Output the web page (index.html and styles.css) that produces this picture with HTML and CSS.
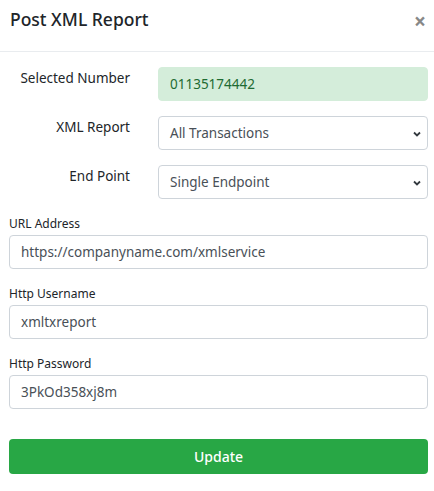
FILE: index.html
```html
<!DOCTYPE html>
<html>
<head>
<meta charset="utf-8">
<link rel="stylesheet" href="styles.css">
</head>
<body>
<div class="modal">
  <div class="modal-header">
    <h5 class="modal-title">Post XML Report</h5>
    <span class="close">&times;</span>
  </div>
  <div class="modal-body">
    <div class="grid">
      <label class="hlabel">Selected Number</label>
      <div class="field field-green">01135174442</div>
      <label class="hlabel">XML Report</label>
      <div class="field field-select">All Transactions
        <svg class="chev" width="10" height="8" viewBox="0 0 10 8"><path d="M2 2.5 L5 5.5 L8 2.5" fill="none" stroke="#343a40" stroke-width="1.8"/></svg>
      </div>
      <label class="hlabel">End Point</label>
      <div class="field field-select">Single Endpoint
        <svg class="chev" width="10" height="8" viewBox="0 0 10 8"><path d="M2 2.5 L5 5.5 L8 2.5" fill="none" stroke="#343a40" stroke-width="1.8"/></svg>
      </div>
    </div>
    <div class="group">
      <label class="vlabel">URL Address</label>
      <div class="field">https://companyname.com/xmlservice</div>
    </div>
    <div class="group">
      <label class="vlabel">Http Username</label>
      <div class="field">xmltxreport</div>
    </div>
    <div class="group">
      <label class="vlabel">Http Password</label>
      <div class="field">3PkOd358xj8m</div>
    </div>
    <button class="btn">Update</button>
  </div>
</div>
</body>
</html>
```
FILE: styles.css
```css
html, body {
  margin: 0;
  padding: 0;
  background: #fff;
}
body {
  font-family: "Noto Sans", "Open Sans", sans-serif;
  color: #212529;
}
.modal {
  width: 434px;
}
.modal-header {
  height: 52px;
  box-sizing: border-box;
  border-bottom: 1px solid #e9ecef;
  display: flex;
  justify-content: space-between;
  align-items: flex-start;
  padding: 5px 8px 0 10px;
}
.modal-title {
  margin: 0;
  font-size: 17.5px;
  font-weight: 500;
  line-height: 28px;
}
.close {
  font-size: 21px;
  font-weight: 700;
  color: #888;
  line-height: 28px;
  margin-top: 2px;
}
.modal-body {
  padding: 15px 6px 0 9px;
}
.grid {
  display: grid;
  grid-template-columns: 121px 1fr;
  column-gap: 28px;
  row-gap: 15px;
}
.hlabel {
  text-align: right;
  font-size: 13.5px;
  line-height: 20px;
  padding-top: 1px;
  color: #212529;
}
.field {
  height: 34px;
  box-sizing: border-box;
  border: 1px solid #ced4da;
  border-radius: 4px;
  padding: 0 11px;
  font-size: 13.5px;
  line-height: 32px;
  color: #495057;
  position: relative;
  white-space: nowrap;
}
.field-green {
  background: #d4edda;
  border-color: #d4edda;
  color: #1e6b32;
}
.chev {
  position: absolute;
  right: 5px;
  top: 13px;
}
.vlabel {
  display: block;
  font-size: 12px;
  line-height: 18px;
  margin-bottom: 2px;
  color: #212529;
}
.grid + .group {
  margin-top: 16px;
}
.group + .group {
  margin-top: 16px;
}
.btn {
  display: block;
  width: 100%;
  margin-top: 30px;
  height: 35px;
  background: #28a745;
  color: #fff;
  border: 0;
  border-radius: 4px;
  font-family: inherit;
  font-size: 14px;
  font-weight: 500;
}
```
